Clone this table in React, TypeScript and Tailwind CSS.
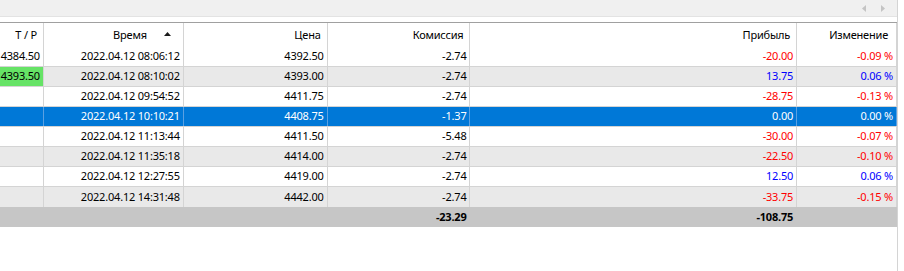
const cols = ['w-[44px]', 'w-[140px]', 'w-[144px]', 'w-[143px]', 'w-[327px]', 'w-[100px]']

type Row = {
  tp: string
  time: string
  price: string
  fee: string
  profit: string
  change: string
}

const rows: Row[] = [
  { tp: '4384.50', time: '2022.04.12 08:06:12', price: '4392.50', fee: '-2.74', profit: '-20.00', change: '-0.09 %' },
  { tp: '4393.50', time: '2022.04.12 08:10:02', price: '4393.00', fee: '-2.74', profit: '13.75', change: '0.06 %' },
  { tp: '', time: '2022.04.12 09:54:52', price: '4411.75', fee: '-2.74', profit: '-28.75', change: '-0.13 %' },
  { tp: '', time: '2022.04.12 10:10:21', price: '4408.75', fee: '-1.37', profit: '0.00', change: '0.00 %' },
  { tp: '', time: '2022.04.12 11:13:44', price: '4411.50', fee: '-5.48', profit: '-30.00', change: '-0.07 %' },
  { tp: '', time: '2022.04.12 11:35:18', price: '4414.00', fee: '-2.74', profit: '-22.50', change: '-0.10 %' },
  { tp: '', time: '2022.04.12 12:27:55', price: '4419.00', fee: '-2.74', profit: '12.50', change: '0.06 %' },
  { tp: '', time: '2022.04.12 14:31:48', price: '4442.00', fee: '-2.74', profit: '-33.75', change: '-0.15 %' },
]

const SELECTED = 3

function valueColor(v: string) {
  if (v.startsWith('-')) return 'text-[#ff0000]'
  if (parseFloat(v) > 0) return 'text-[#0000ff]'
  return 'text-black'
}

function SortUp() {
  return (
    <svg width="7" height="4" viewBox="0 0 7 4" className="ml-[17px] mr-[12px] mb-[3px]">
      <path d="M0 4 L3.5 0 L7 4 Z" fill="#1a1a1a" />
    </svg>
  )
}

export default function App() {
  return (
    <div
      className="w-[904px] h-[271px] bg-white text-[11px] tracking-[-0.2px] text-black overflow-hidden"
      style={{ fontFamily: '"Noto Sans", "Segoe UI", sans-serif' }}
    >
      <div className="w-[898px] h-full border-r border-[#d4d4d4] flex flex-col">
        <div className="h-[17px] bg-[#f0f0f0] border-b border-[#e3e3e3] flex items-center justify-end gap-[15px] pr-[12px]">
          <svg width="4" height="7" viewBox="0 0 4 7">
            <path d="M4 0 L0 3.5 L4 7 Z" fill="#c4c4c4" />
          </svg>
          <svg width="4" height="7" viewBox="0 0 4 7">
            <path d="M0 0 L4 3.5 L0 7 Z" fill="#c4c4c4" />
          </svg>
        </div>
        <div className="h-[5px]" />
        <div className="border-t border-[#a0a0a0] h-[25px] flex">
          <div className={`${cols[0]} border-r border-[#d4d4d4] flex items-center justify-end pr-[6px]`}>T / P</div>
          <div className={`${cols[1]} border-r border-[#d4d4d4] flex items-center justify-end`}>
            <span>Время</span>
            <SortUp />
          </div>
          <div className={`${cols[2]} border-r border-[#d4d4d4] flex items-center justify-end pr-[6px]`}>Цена</div>
          <div className={`${cols[3]} border-r border-[#d4d4d4] flex items-center justify-end pr-[6px]`}>Комиссия</div>
          <div className={`${cols[4]} border-r border-[#d4d4d4] flex items-center justify-end pr-[6px]`}>Прибыль</div>
          <div className={`${cols[5]} border-r border-[#d4d4d4] flex items-center justify-end pr-[8px]`}>Изменение</div>
        </div>
        {rows.map((r, i) => {
          const sel = i === SELECTED
          const bg = sel ? 'bg-[#0078d7] text-white' : i % 2 === 1 ? 'bg-[#e9e9e9]' : 'bg-white'
          const line = sel ? 'border-[#5aa0e2]' : 'border-[#d4d4d4]'
          return (
            <div key={i} className={`flex h-[20px] ${i < rows.length - 1 ? 'border-b border-[#d4d4d4]' : ''} ${bg}`}>
              <div
                className={`${cols[0]} border-r ${line} flex items-center justify-end pr-[3px] ${r.tp && i === 1 ? 'bg-[#66e366]' : ''}`}
              >
                {r.tp}
              </div>
              <div className={`${cols[1]} border-r ${line} flex items-center justify-end pr-[3px]`}>{r.time}</div>
              <div className={`${cols[2]} border-r ${line} flex items-center justify-end pr-[3px]`}>{r.price}</div>
              <div className={`${cols[3]} border-r ${line} flex items-center justify-end pr-[3px]`}>{r.fee}</div>
              <div className={`${cols[4]} border-r ${line} flex items-center justify-end pr-[3px] ${sel ? '' : valueColor(r.profit)}`}>
                {r.profit}
              </div>
              <div className={`${cols[5]} border-r ${line} flex items-center justify-end pr-[3px] ${sel ? '' : valueColor(r.change)}`}>
                {r.change}
              </div>
            </div>
          )
        })}
        <div className="flex h-[20px] bg-[#c6c6c6] font-bold">
          <div className={cols[0]} />
          <div className={cols[1]} />
          <div className={cols[2]} />
          <div className={`${cols[3]} flex items-center justify-end pr-[4px]`}>-23.29</div>
          <div className={`${cols[4]} flex items-center justify-end pr-[4px]`}>-108.75</div>
          <div className={cols[5]} />
        </div>
      </div>
    </div>
  )
}
